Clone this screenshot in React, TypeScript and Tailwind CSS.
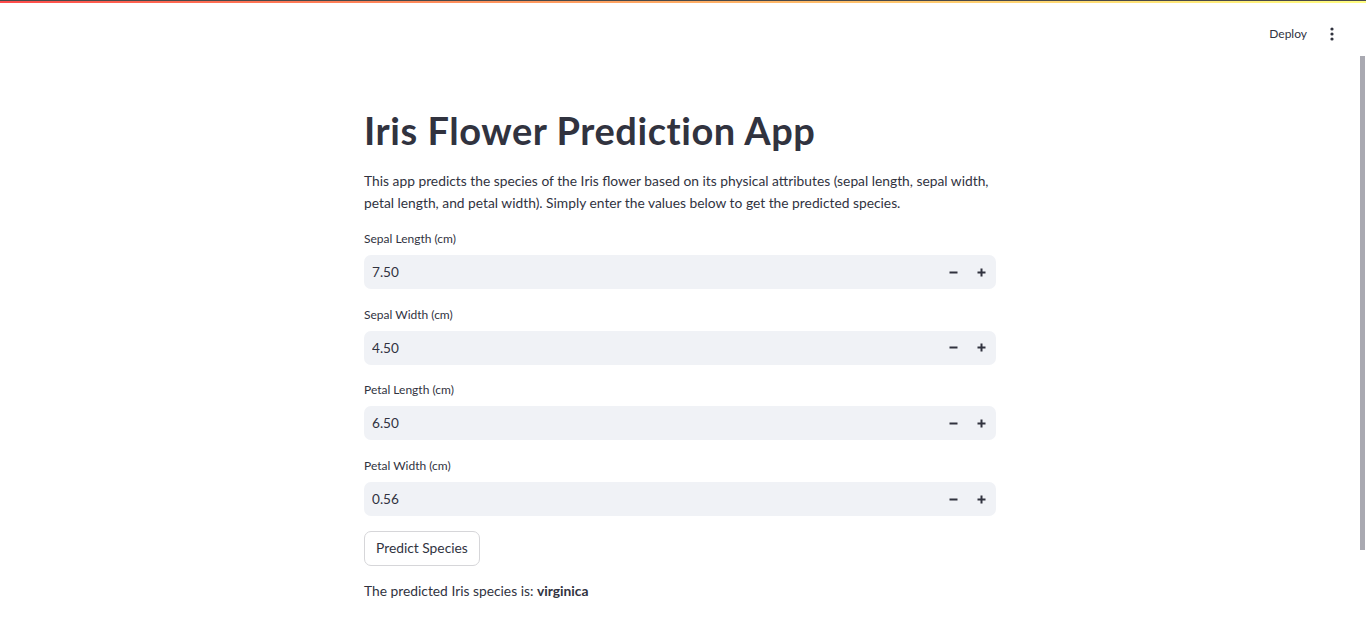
import { useState } from 'react';

const FIELDS = [
  { label: 'Sepal Length (cm)', value: 7.5 },
  { label: 'Sepal Width (cm)', value: 4.5 },
  { label: 'Petal Length (cm)', value: 6.5 },
  { label: 'Petal Width (cm)', value: 0.56 },
];

export default function App() {
  const [values, setValues] = useState(FIELDS.map((f) => f.value));

  function step(i: number, d: number) {
    setValues((v) => v.map((x, j) => (j === i ? Math.round((x + d) * 100) / 100 : x)));
  }

  return (
    <div className="relative min-h-[643px] bg-white text-[#31333F]" style={{ fontFamily: 'Lato, "Source Sans Pro", sans-serif' }}>
      {/* Top decoration */}
      <div className="h-px bg-[#4a4a4a]" />
      <div className="h-[2px] bg-gradient-to-r from-[#ff4b4b] to-[#fffd80]" />

      {/* Header */}
      <div className="flex h-[62px] items-center justify-end pr-[22px]">
        <button className="mr-[13px] text-[12px] text-[#31333F]">Deploy</button>
        <button className="flex h-6 w-6 items-center justify-center">
          <svg width="4" height="14" viewBox="0 0 4 14" fill="#31333F">
            <circle cx="2" cy="2" r="1.6" />
            <circle cx="2" cy="7" r="1.6" />
            <circle cx="2" cy="12" r="1.6" />
          </svg>
        </button>
      </div>

      {/* Scrollbar */}
      <div className="absolute right-[1px] top-[56px] h-[494px] w-[5px] bg-[#a9a9b1]" />

      {/* Main */}
      <div className="pr-[6px]">
        <div className="mx-auto w-[632px] pt-[41px]">
          <h1 className="text-[38px] font-bold leading-[48px] tracking-[0.55px]">Iris Flower Prediction App</h1>
          <p className="mt-[16px] text-[13.8px] leading-[21.5px]">
            This app predicts the species of the Iris flower based on its physical attributes (sepal length, sepal width,
            petal length, and petal width). Simply enter the values below to get the predicted species.
          </p>

          <div className="mt-[16px]">
            {FIELDS.map((f, i) => (
              <div key={f.label} className="mb-[15.7px]">
                <label className="flex h-[20px] items-center text-[12px]">{f.label}</label>
                <div className="mt-[6px] flex h-[34px] items-center rounded-[7px] bg-[#F0F2F6]">
                  <input
                    className="h-full flex-1 bg-transparent pl-[8px] text-[13.6px] text-[#31333F] outline-none"
                    value={values[i].toFixed(2)}
                    readOnly
                  />
                  <button onClick={() => step(i, -0.01)} className="flex h-full w-[28px] items-center justify-center">
                    <svg width="9" height="9" viewBox="0 0 9 9">
                      <path d="M0.5 4.5h8" stroke="#31333F" strokeWidth="2" />
                    </svg>
                  </button>
                  <button onClick={() => step(i, 0.01)} className="flex h-full w-[29px] items-center justify-center">
                    <svg width="9" height="9" viewBox="0 0 9 9">
                      <path d="M0.5 4.5h8M4.5 0.5v8" stroke="#31333F" strokeWidth="2" />
                    </svg>
                  </button>
                </div>
              </div>
            ))}
          </div>

          <button className="-mt-[1px] h-[35px] rounded-[7px] border border-[#d6d6d9] bg-white px-[11px] text-[13.8px]">
            Predict Species
          </button>

          <p className="mt-[15px] text-[13.8px]">
            The predicted Iris species is: <span className="font-bold">virginica</span>
          </p>
        </div>
      </div>
    </div>
  );
}
